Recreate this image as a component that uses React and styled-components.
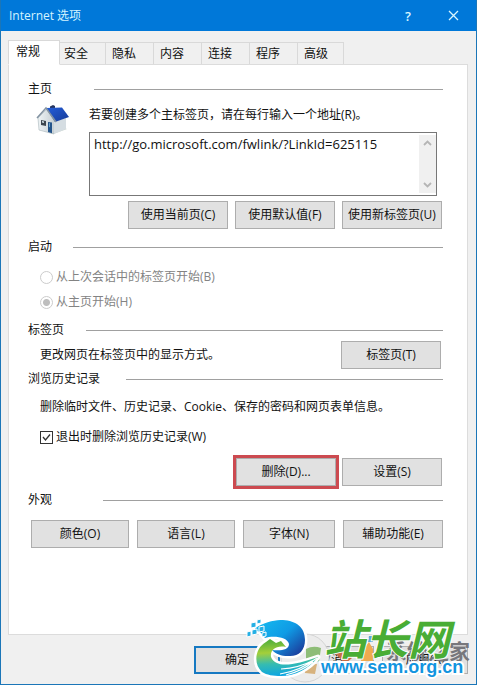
import React from "react";
import styled, { createGlobalStyle, css } from "styled-components";

const Global = createGlobalStyle`
  *, *::before, *::after { box-sizing: border-box; }
  body { margin: 0; background: #f0f0f0; }
  body, button, input, textarea {
    font-family: "Open Sans", "Noto Sans CJK SC", sans-serif;
    font-size: 12px;
    line-height: 16px;
    color: #111;
  }
`;

const Dialog = styled.main`
  display: flex;
  flex-direction: column;
  position: relative;
  min-height: 100vh;
  background: #f0f0f0;
  border: 1px solid #1b76b8;
  border-width: 0 1px 1px;
  overflow: hidden;
`;

const TitleBar = styled.header`
  display: flex;
  align-items: center;
  height: 31px;
  padding: 0 10px 0 8px;
  background: #0078d9;
`;

const Title = styled.h1`
  flex: 1;
  margin: 0;
  font-size: 12px;
  font-weight: 400;
  color: #d4f4ff;
`;

const TitleButton = styled.button`
  display: grid;
  place-items: center;
  width: 26px;
  height: 26px;
  margin-left: 19px;
  padding: 0;
  border: 0;
  background: none;
  color: #d9f6ff;
  font-size: 13px;
  font-weight: 600;
`;

const TabList = styled.nav`
  display: flex;
  align-items: flex-end;
  height: 34px;
  padding-left: 7px;
`;

const Tab = styled.button`
  width: 48px;
  height: 23px;
  padding: 0 0 0 10px;
  text-align: left;
  background: #f0f0f0;
  border: 1px solid #d9d9d9;
  border-left-width: 0;
  ${(p) =>
    p.$active &&
    css`
      position: relative;
      z-index: 1;
      width: 52px;
      height: 25px;
      padding: 0 0 2px 7px;
      background: #fff;
      border-left-width: 1px;
      border-bottom-color: #fff;
    `}
  &:nth-child(2) { width: 46px; padding-left: 4px; }
  &:nth-child(n + 3) { padding-left: 6px; }
  &:last-child { width: 46px; }
`;

const Panel = styled.section`
  display: flex;
  flex-direction: column;
  flex: 1;
  margin: -1px 8px 0 7px;
  padding: 16px 24px 0 19px;
  background: #fff;
  border: 1px solid #dcdcdc;
`;

const Group = styled.section`
  display: flex;
  flex-direction: column;
  min-height: ${(p) => p.$height}px;
`;

const Heading = styled.h2`
  display: flex;
  align-items: center;
  margin: 0;
  font-size: 12px;
  font-weight: 400;
  &::after {
    content: "";
    flex: 1;
    height: 1px;
    margin-left: ${(p) => p.$gap}px;
    background: #a0a0a0;
  }
`;

const HomeBody = styled.div`
  display: flex;
  gap: 19px;
  padding: 7px 6px 0 8px;
`;

const HomeFields = styled.div`
  display: flex;
  flex-direction: column;
  flex: 1;
  gap: 9px;
  padding-top: 3px;
`;

const AddressBox = styled.div`
  display: flex;
  height: 64px;
  border: 1px solid #777;
`;

const Address = styled.textarea`
  flex: 1;
  min-width: 0;
  padding: 2px 4px;
  border: 0;
  outline: 0;
  resize: none;
  overflow: hidden;
  background: #fff;
  font-size: 13px;
  line-height: 18px;
`;

const ScrollTrack = styled.div`
  display: flex;
  flex-direction: column;
  justify-content: space-between;
  align-items: center;
  width: 17px;
  margin: 2px 0;
  padding: 5px 0;
  background: #f0f0f0;
`;

const ButtonRow = styled.div`
  display: flex;
  justify-content: flex-end;
  gap: ${(p) => p.$gap || 8}px;
  padding: ${(p) => p.$pad || "0"};
`;

const Button = styled.button`
  width: ${(p) => p.$width || 100}px;
  height: 28px;
  padding: 0;
  background: #e1e1e1;
  border: 1px solid #adadad;
  white-space: nowrap;
  ${(p) =>
    p.$default &&
    css`
      border: 2px solid #1679c2;
    `}
`;

const Highlight = styled.div`
  display: flex;
  margin: -3px -1px -3px 0;
  border: 3px solid #cc4a50;
`;

const Options = styled.div`
  display: flex;
  flex-direction: column;
  gap: 9px;
  padding: 14px 0 0 12px;
`;

const Option = styled.label`
  display: flex;
  align-items: center;
  gap: 3px;
  color: ${(p) => (p.$muted ? "#838383" : "#111")};
`;

const Radio = styled.input.attrs({ type: "radio" })`
  appearance: none;
  width: 13px;
  height: 13px;
  margin: 0;
  border: 1px solid #ccc;
  border-radius: 50%;
  background: #fff;
  &:checked { background: radial-gradient(circle, #bebebe 3px, #fff 4px); }
`;

const Tick = styled.span`
  display: grid;
  width: 13px;
  height: 13px;
  & > * { grid-area: 1 / 1; }
`;

const Check = styled.input.attrs({ type: "checkbox" })`
  appearance: none;
  width: 13px;
  height: 13px;
  margin: 0;
  border: 1px solid #333;
  background: #fff;
  & + svg { visibility: hidden; pointer-events: none; }
  &:checked + svg { visibility: visible; }
`;

const Line = styled.div`
  display: flex;
  align-items: center;
  justify-content: space-between;
  padding: ${(p) => p.$pad};
`;

const Footer = styled.footer`
  display: flex;
  justify-content: flex-end;
  gap: 8px;
  padding: 11px 8px 10px;
`;

const Watermark = styled.aside`
  position: absolute;
  right: 3px;
  bottom: 0;
  width: 240px;
  height: 72px;
  pointer-events: none;
`;

const Drawing = styled.svg`
  display: block;
  overflow: visible;
`;

const MarkText = styled.span`
  position: absolute;
  white-space: nowrap;
  paint-order: stroke fill;
`;

const Behind = styled(MarkText)`
  left: 153px;
  top: 24px;
  font: 700 21px/28px "Noto Sans CJK SC", sans-serif;
  color: #77777c;
`;

const MarkName = styled(MarkText)`
  left: 91px;
  top: 1px;
  font: italic 700 42px/48px "Noto Sans CJK SC", sans-serif;
  color: #49ad35;
  -webkit-text-stroke: 2px #fff;
`;

const MarkSite = styled(MarkText)`
  left: 88px;
  top: 43px;
  font: 700 18px/24px "Liberation Sans", sans-serif;
  color: #1295df;
  -webkit-text-stroke: 4px #fff;
`;

function House() {
  return (
    <Drawing width="34" height="32" viewBox="0 0 34 32" aria-hidden="true">
      <defs>
        <linearGradient id="roof" x2="1" y2="1">
          <stop stopColor="#245edb" />
          <stop offset="1" stopColor="#173b96" />
        </linearGradient>
        <linearGradient id="wall" x2="1">
          <stop stopColor="#eef3f5" />
          <stop offset="1" stopColor="#c2cbd0" />
        </linearGradient>
      </defs>
      <path d="m3 25 14 5 14-5-9-3Z" fill="#a5b8a5" opacity=".6" />
      <path d="m2 14 9-9 9 11-2 14L3 26Z" fill="url(#wall)" stroke="#a7b5bb" strokeWidth=".6" />
      <path d="m18 18 12-4v11l-12 5Z" fill="#d5dde2" />
      <path d="M14 2.500V7h5V2l-2-1Z" fill="#26355f" />
      <path d="m10 4 16-.5L33 13l-14 5Z" fill="url(#roof)" />
      <path d="m1 14 9-10 10 14" fill="none" stroke="#8393a2" strokeWidth="1.500" />
      <path d="m5 16 5 1v5l-5-1Z" fill="#3d464f" />
      <path d="m6 17 2 .5V19l-2-.5Z" fill="#d9e5ea" />
      <path d="m12 18 4 .6v10.600l-4-1.200Z" fill="#24548a" />
      <path d="m13 19 1 .2v4l-1-.2Z" fill="#69a4ce" />
    </Drawing>
  );
}

function Arrow({ down }) {
  return (
    <Drawing width="9" height="6" viewBox="0 0 9 6" aria-hidden="true">
      <path d={down ? "m1 1 3.500 3.500L8 1" : "M1 5 4.500 1.500 8 5"} fill="none" stroke="#b5b5b5" strokeWidth="1.800" />
    </Drawing>
  );
}

const crest = "M24 15C34 9 43 8 50 8C63 9 72 15 72 28C72 39 65 45 55 44C48 44 43 42 39 38C48 39 56 38 56 32C55 25 40 23 32 26L27 20L21 18Z";
const swoosh = "M29 60C20 52 22 36 33 30L37 27L43 31L48 29L53 35C43 33 37 38 38 45C43 57 62 53 85 45C76 57 62 64 48 64C40 64 34 63 29 60Z";

function Swirl() {
  return (
    <Drawing width="240" height="72" viewBox="0 0 240 72" aria-hidden="true">
      <defs>
        <linearGradient id="wave" x1="0" x2="1" y2=".8">
          <stop stopColor="#16bdf0" />
          <stop offset=".55" stopColor="#0f9be5" />
          <stop offset="1" stopColor="#1b3f9e" />
        </linearGradient>
        <linearGradient id="hill" x1=".4" x2=".5" y2="1">
          <stop stopColor="#4fae3c" />
          <stop offset=".35" stopColor="#a4cf3a" />
          <stop offset=".65" stopColor="#36bcb0" />
          <stop offset="1" stopColor="#0ba4e5" />
        </linearGradient>
      </defs>
      <circle cx="72" cy="46" r="24" fill="#ececec" stroke="#d5d5d5" />
      <path d="M73 37q7-4 15-1l-2 14q-6-3-13 0Z" fill="#8ebd77" />
      <path d="m72 53 12-1-2 10-10-1Z" fill="#d7b27d" />
      <g stroke="#fff" strokeWidth="5" strokeLinejoin="round" fill="#fff">
        <path d={crest} />
        <path d={swoosh} />
      </g>
      <path d={crest} fill="url(#wave)" />
      <path d={swoosh} fill="url(#hill)" />
      <path d="M47 62q20-3 37-16M48 57q18-1 33-9M53 63q16-4 27-13" fill="none" stroke="#fff" strokeWidth="1.200" />
      <g fill="#24afe4" stroke="#fff" strokeWidth="1">
        <path d="m18 11 5-1v5l-5 1Z" />
        <path d="m24 8 4-1v4l-4 1Z" />
        <path d="m19 18 5-1v5l-5 1Z" />
        <path d="m26 15 5-1v5l-5 1Z" />
        <path d="m14 20 4-1v5l-4 1Z" />
        <path d="m29 21 4-1v4l-4 1Z" />
      </g>
      <path d="m102 41 5-5 12 10-7 6Z" fill="#c96c43" />
      <path d="m129 39 7-9 4 7v12h-12Z" fill="#efaa50" />
      <path d="M135 30h5v-6h-4Z" fill="#60a7d2" />
    </Drawing>
  );
}

export default function App() {
  return (
    <>
      <Global />
      <Dialog>
        <TitleBar>
          <Title>Internet 选项</Title>
          <TitleButton aria-label="帮助">?</TitleButton>
          <TitleButton aria-label="关闭">
            <Drawing width="11" height="11" viewBox="0 0 11 11">
              <path d="m1 1 9 9M10 1 1 10" stroke="currentColor" strokeWidth="1.300" />
            </Drawing>
          </TitleButton>
        </TitleBar>
        <TabList>
          {["常规", "安全", "隐私", "内容", "连接", "程序", "高级"].map((name, i) => (
            <Tab key={name} $active={i === 0}>{name}</Tab>
          ))}
        </TabList>
        <Panel>
          <Group $height={158}>
            <Heading $gap={42}>主页</Heading>
            <HomeBody>
              <House />
              <HomeFields>
                <label htmlFor="address">若要创建多个主标签页，请在每行输入一个地址(R)。</label>
                <AddressBox>
                  <Address id="address" defaultValue="http://go.microsoft.com/fwlink/?LinkId=625115" />
                  <ScrollTrack><Arrow /><Arrow down /></ScrollTrack>
                </AddressBox>
              </HomeFields>
            </HomeBody>
            <ButtonRow $gap={7} $pad="5px 1px 0 0">
              <Button>使用当前页(C)</Button>
              <Button>使用默认值(F)</Button>
              <Button>使用新标签页(U)</Button>
            </ButtonRow>
          </Group>
          <Group $height={83}>
            <Heading $gap={21}>启动</Heading>
            <Options>
              <Option $muted><Radio name="start" disabled />从上次会话中的标签页开始(B)</Option>
              <Option $muted><Radio name="start" disabled defaultChecked />从主页开始(H)</Option>
            </Options>
          </Group>
          <Group $height={49}>
            <Heading $gap={22}>标签页</Heading>
            <Line $pad="3px 2px 0 12px">
              <span>更改网页在标签页中的显示方式。</span>
              <Button>标签页(T)</Button>
            </Line>
          </Group>
          <Group $height={121}>
            <Heading $gap={26}>浏览历史记录</Heading>
            <Line $pad="12px 0 0 12px">删除临时文件、历史记录、Cookie、保存的密码和网页表单信息。</Line>
            <Line $pad="14px 0 0 12px">
              <Option>
                <Tick>
                  <Check defaultChecked />
                  <Drawing width="13" height="13" viewBox="0 0 13 13" aria-hidden="true">
                    <path d="m3 6 2.500 3L10 3.500" fill="none" stroke="#333" strokeWidth="1.300" />
                  </Drawing>
                </Tick>
                退出时删除浏览历史记录(W)
              </Option>
            </Line>
            <ButtonRow $gap={4} $pad="13px 1px 0 0">
              <Highlight><Button>删除(D)...</Button></Highlight>
              <Button>设置(S)</Button>
            </ButtonRow>
          </Group>
          <Group $height={56}>
            <Heading $gap={51}>外观</Heading>
            <ButtonRow $pad="12px 0 0">
              <Button $width={98}>颜色(O)</Button>
              <Button $width={98}>语言(L)</Button>
              <Button $width={92}>字体(N)</Button>
              <Button>辅助功能(E)</Button>
            </ButtonRow>
          </Group>
        </Panel>
        <Footer>
          <Button $width={86} $default>确定</Button>
          <Button $width={86}>取消</Button>
          <Button $width={86}>应用(A)</Button>
        </Footer>
        <Watermark aria-hidden="true">
          <Behind>系统之家</Behind>
          <Swirl />
          <MarkName>站长网</MarkName>
          <MarkSite>www.sem.org.cn</MarkSite>
        </Watermark>
      </Dialog>
    </>
  );
}
